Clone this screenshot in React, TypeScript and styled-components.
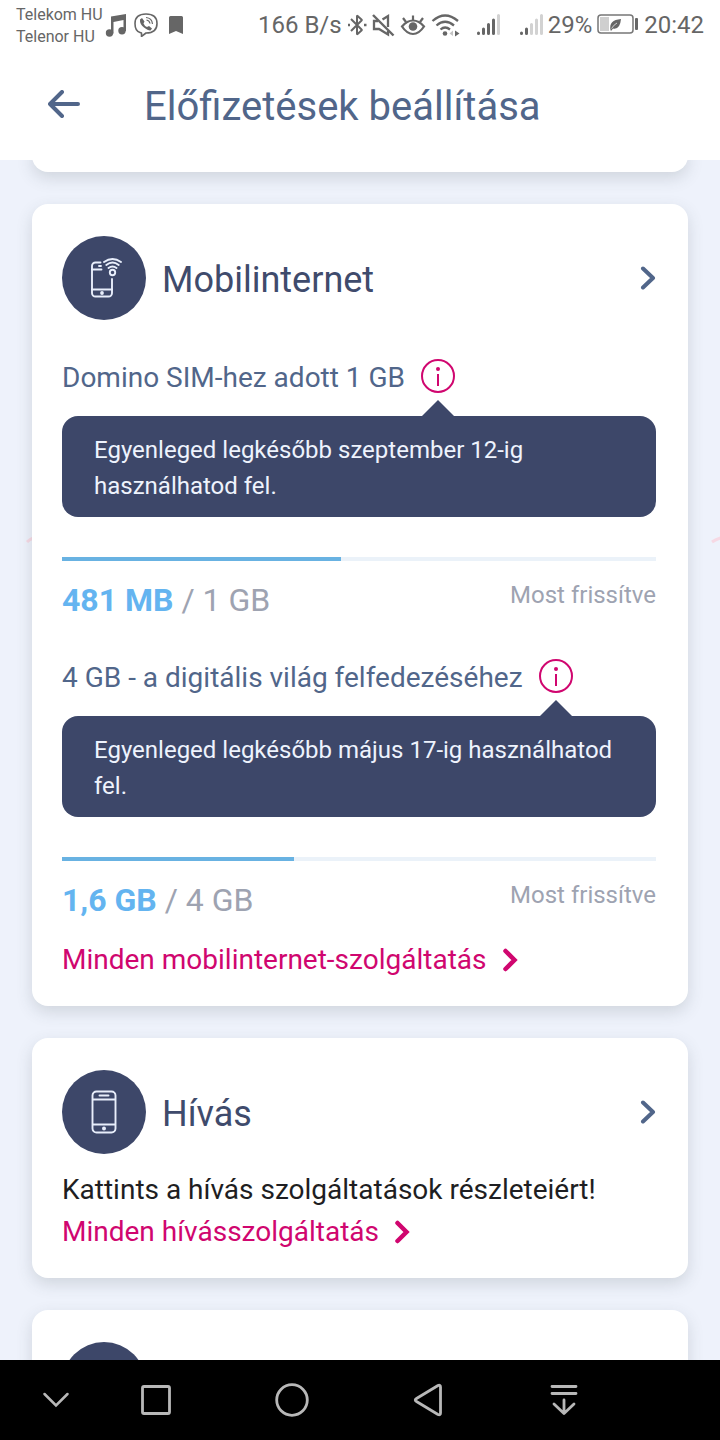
import React from "react";
import styled, { createGlobalStyle } from "styled-components";

const color = {
  navy: "#3d4769",
  slate: "#51668a",
  heading: "#3f4b6c",
  magenta: "#d0066f",
  sky: "#64b4f0",
  bar: "#68b2e2",
  track: "#ebf2f9",
  grey: "#9ea3b1",
  status: "#666666",
  page: "#eef2fb",
  nav: "#b8b8b8",
};

const GlobalStyle = createGlobalStyle`
  *, *::before, *::after { box-sizing: border-box; }
  body { margin: 0; background: ${color.page}; font-family: Roboto, "Liberation Sans", sans-serif; }
  h1, h2, h3, p { margin: 0; font-weight: 400; }
  button { margin: 0; padding: 0; border: 0; background: none; font: inherit; color: inherit; cursor: pointer; }
  a { text-decoration: none; }
  svg { display: block; flex: none; }
`;

const Screen = styled.div`
  display: flex;
  flex-direction: column;
  height: 100vh;
`;

const StatusBar = styled.div`
  flex: none;
  display: flex;
  justify-content: space-between;
  align-items: center;
  height: 48px;
  padding: 2px 16px 0;
  background: #fff;
  color: ${color.status};
  font-size: 24px;
  line-height: 28px;
  white-space: nowrap;
`;

const StatusGroup = styled.div<{ $gap: number }>`
  display: flex;
  align-items: center;
  gap: ${(p) => p.$gap}px;
`;

const Operators = styled.div`
  padding-top: 2px;
  font-size: 16px;
  line-height: 22px;
`;

const TopBar = styled.header`
  flex: none;
  display: flex;
  align-items: center;
  gap: 64px;
  height: 112px;
  padding: 0 48px;
  background: #fff;
  color: ${color.slate};
`;

const Title = styled.h1`
  font-size: 40px;
  line-height: 48px;
  padding-top: 6px;
`;

const Content = styled.main`
  position: relative;
  flex: 1;
  min-height: 0;
  overflow: hidden auto;
  scrollbar-width: none;
  padding: 0 32px;
`;

const Backdrop = styled.svg`
  position: absolute;
  left: 0;
  top: 368px;
  width: 100%;
  height: 24px;
`;

const CardList = styled.div`
  position: relative;
  display: flex;
  flex-direction: column;
  gap: 32px;
`;

const Card = styled.section`
  padding: 32px 32px 24px 30px;
  border-radius: 16px;
  background: #fff;
  box-shadow: 0 6px 16px rgba(60, 70, 80, 0.17);
`;

const CardTail = styled(Card)`
  height: 32px;
  margin-top: -20px;
  padding: 0;
`;

const CardHeader = styled.div`
  display: flex;
  align-items: center;
  gap: 16px;
`;

const RoundIcon = styled.span`
  flex: none;
  display: flex;
  align-items: center;
  justify-content: center;
  width: 84px;
  height: 84px;
  border-radius: 50%;
  background: ${color.navy};
  color: #e8eefb;
`;

const CardTitle = styled.h2`
  flex: 1;
  padding-top: 4px;
  font-size: 36px;
  line-height: 44px;
  color: ${color.heading};
`;

const OpenButton = styled.button`
  color: ${color.slate};
`;

const AllowanceList = styled.div`
  display: flex;
  flex-direction: column;
  gap: 38px;
  padding: 38px 0 18px;
`;

const Allowance = styled.article`
  display: flex;
  flex-direction: column;
`;

const AllowanceName = styled.div`
  display: flex;
  align-items: center;
  gap: 16px;
  height: 36px;
  color: ${color.slate};
`;

const Name = styled.h3`
  padding-top: 4px;
  font-size: 28px;
  line-height: 36px;
`;

const InfoButton = styled.button`
  position: relative;
  color: ${color.magenta};
  &::after {
    content: "";
    position: absolute;
    top: 41px;
    left: 0;
    border: 17px solid transparent;
    border-top-width: 0;
    border-bottom-color: ${color.navy};
  }
`;

const Tooltip = styled.p`
  margin-top: 22px;
  padding: 16px 32px 13px;
  border-radius: 16px;
  background: ${color.navy};
  color: #eef3fd;
  font-size: 24px;
  line-height: 36px;
`;

const Track = styled.div`
  height: 4px;
  margin-top: 40px;
  background: ${color.track};
`;

const Fill = styled.div`
  height: 100%;
  background: ${color.bar};
`;

const Usage = styled.div`
  display: flex;
  justify-content: space-between;
  align-items: flex-start;
  height: 59px;
  padding-top: 20px;
  color: ${color.grey};
`;

const Amount = styled.span`
  font-size: 32px;
  line-height: 38px;
`;

const Left = styled.strong`
  font-weight: 700;
  color: ${color.sky};
`;

const Updated = styled.span`
  font-size: 24px;
  line-height: 28px;
`;

const Hint = styled.p`
  padding-top: 16px;
  font-size: 28px;
  line-height: 40px;
  color: #1e1e22;
`;

const MoreLink = styled.a`
  display: flex;
  align-items: center;
  gap: 16px;
  font-size: 28px;
  line-height: 44px;
  color: ${color.magenta};
`;

const NavBar = styled.nav`
  flex: none;
  display: grid;
  grid-template-columns: 88px repeat(4, 136px);
  align-items: center;
  height: 80px;
  background: #000;
  color: ${color.nav};
`;

const NavButton = styled.button`
  display: flex;
  justify-content: center;
  &:first-child { padding-left: 24px; }
`;

function Chevron() {
  return (
    <svg width="16" height="24" viewBox="0 0 16 24" fill="none" stroke="currentColor" strokeWidth="4" strokeLinecap="round" strokeLinejoin="round" aria-hidden="true">
      <path d="M3 2.500L13 12L3 21.500" />
    </svg>
  );
}

function LinkChevron() {
  return (
    <svg width="16" height="24" viewBox="0 0 16 24" fill="none" stroke="currentColor" strokeWidth="4.500" strokeLinecap="round" strokeLinejoin="miter" aria-hidden="true">
      <path d="M2.500 3L11.500 12L2.500 21" />
    </svg>
  );
}

function InfoIcon() {
  return (
    <svg width="34" height="34" viewBox="0 0 34 34" fill="none" stroke="currentColor" strokeWidth="2" aria-hidden="true">
      <circle cx="17" cy="17" r="16" />
      <path d="M17 15V27" />
      <circle cx="17" cy="10" r="2" fill="currentColor" stroke="none" />
    </svg>
  );
}

function PhoneIcon() {
  return (
    <svg width="26" height="44" viewBox="0 0 26 44" fill="none" stroke="currentColor" strokeWidth="1.900" aria-hidden="true">
      <rect x="1.500" y="1.500" width="23" height="41" rx="4" />
      <path d="M1.500 9.500H24.500M1.500 34.500H24.500" />
      <path d="M8.500 5.500H17.500" strokeLinecap="round" />
      <circle cx="13" cy="38.500" r="2" fill="currentColor" stroke="none" />
    </svg>
  );
}

function PhoneWifiIcon() {
  return (
    <svg width="40" height="40" viewBox="0 0 40 40" fill="none" stroke="currentColor" strokeWidth="1.900" strokeLinecap="round" aria-hidden="true">
      <path d="M16.500 4.500H11.500A3.500 3.500 0 0 0 8 8V35A3.500 3.500 0 0 0 11.500 38.500H24.500A3.500 3.500 0 0 0 28 35V21" />
      <path d="M8 11.500H17.500M8 31.500H28M15 8H17" />
      <circle cx="18" cy="35" r="1.900" fill="currentColor" stroke="none" />
      <circle cx="28.500" cy="14.500" r="2.700" />
      <path d="M20 4Q28.500 -2 37 4M22.300 7Q28.500 2.200 34.700 7M24.500 10Q28.500 6.800 32.500 10" />
    </svg>
  );
}

function StatusIcons() {
  return (
    <>
      <svg width="20" height="24" viewBox="0 0 20 24" fill="none" stroke="currentColor" role="img" aria-label="Bluetooth">
        <path d="M4 6L15 17L10 21.500V2.500L15 7L4 18" strokeWidth="2" strokeLinejoin="bevel" />
        <path d="M1 12H3M17 12H19.500" strokeWidth="2.500" />
      </svg>
      <svg width="23" height="24" viewBox="0 0 23 24" fill="none" stroke="currentColor" strokeWidth="2.300" role="img" aria-label="Némítva">
        <path d="M1 2L21.500 22.500" strokeWidth="2.400" />
        <path d="M6 8H2V16H7L16 21.500V18M10.500 6.500L16 3V14" />
      </svg>
      <svg width="26" height="24" viewBox="0 0 26 24" fill="none" stroke="currentColor" strokeWidth="2.200" role="img" aria-label="Szemkímélő mód">
        <path d="M2 13.500Q7 7.500 13 7.500T24 13.500Q19 21 13 21T2 13.500Z" />
        <path d="M13 7.500V2.500M6 9L3 5M20 9L23 5" />
        <circle cx="13" cy="13.500" r="4.300" fill="currentColor" stroke="none" />
      </svg>
      <svg width="29" height="24" viewBox="0 0 29 24" fill="none" stroke="currentColor" strokeWidth="2.300" role="img" aria-label="Wi-Fi">
        <path d="M1.500 8Q14 -3 27 8M5.500 12.500Q14 5 23 12.500M9.500 16.500Q14 12.500 19 16.500" />
        <circle cx="14" cy="20.500" r="2.300" fill="currentColor" stroke="none" />
        <path d="M22 17.500L18.500 20.500L22 23Z" fill="#c4c4c4" stroke="none" />
        <path d="M24 17.500L28.500 20.500L24 23.500Z" fill="currentColor" stroke="none" />
      </svg>
      <svg width="78" height="24" viewBox="0 0 78 24" fill="none" stroke="currentColor" strokeWidth="3" strokeLinecap="round" role="img" aria-label="Térerő">
        <path d="M13.500 20V20.500M18.500 16V20.500M23.500 11.500V20.500M28.500 7V20.500" />
        <path d="M33.500 2.500V20.500M66.500 11.500V20.500M71.500 7V20.500M76.500 2.500V20.500" stroke="#d2d2d2" />
        <path d="M56.500 20V20.500M61.500 16V20.500" />
      </svg>
    </>
  );
}

function Battery() {
  return (
    <svg width="42" height="24" viewBox="0 0 42 24" fill="none" role="img" aria-label="Akkumulátor">
      <rect x="1" y="2" width="35" height="18" rx="3" stroke="#777" strokeWidth="1.500" />
      <rect x="3" y="4" width="9" height="14" fill="#cfcfcf" />
      <path d="M13.500 17Q11.500 7 24 6Q23 17 16 15.500L14 18Z" fill="currentColor" />
      <path d="M14.500 15.500Q17 11.500 20 10" stroke="#fff" strokeWidth="0.700" />
      <rect x="38" y="5" width="3" height="12" rx="1" fill="currentColor" />
    </svg>
  );
}

function NotificationIcons() {
  return (
    <>
      <svg width="22" height="24" viewBox="0 0 22 24" fill="currentColor" role="img" aria-label="Zene">
        <path d="M6 3.500L21 1V18H18.500V7L8.500 9V20.500H6Z" />
        <circle cx="4.500" cy="20" r="3.700" />
        <circle cx="17" cy="17.800" r="3.700" />
      </svg>
      <svg width="24" height="24" viewBox="0 0 24 24" fill="none" stroke="currentColor" strokeWidth="1.600" strokeLinejoin="round" role="img" aria-label="Viber">
        <path d="M6 19.500Q1 18 1 10.500Q1 1 12 1T23 10.500Q23 20 12 20L7.500 23.500V20Z" />
        <path d="M6 6.500L8 5L10.500 8.500L9.500 10.500Q10.500 13 13 14L15 13L18 15.500L16.500 17.500Q14.500 18 10 14.500T6 6.500Z" fill="currentColor" stroke="none" />
        <path d="M12 4.500Q18 5 18.500 11M12.500 7Q15.500 7.500 16 10.500" strokeWidth="1.200" />
      </svg>
      <svg width="18" height="18" viewBox="0 0 18 18" fill="currentColor" role="img" aria-label="Könyvjelző">
        <path d="M4 1.500Q4 0 5.500 0H16.500Q18 0 18 1.500V18L11 15L4 18Z" />
      </svg>
    </>
  );
}

interface AllowanceData {
  name: string;
  note: string;
  left: string;
  total: string;
  percent: number;
}

const allowances: AllowanceData[] = [
  {
    name: "Domino SIM-hez adott 1 GB",
    note: "Egyenleged legkésőbb szeptember 12-ig használhatod fel.",
    left: "481 MB",
    total: "1 GB",
    percent: 47,
  },
  {
    name: "4 GB - a digitális világ felfedezéséhez",
    note: "Egyenleged legkésőbb május 17-ig használhatod fel.",
    left: "1,6 GB",
    total: "4 GB",
    percent: 39,
  },
];

export default function App() {
  return (
    <>
      <GlobalStyle />
      <Screen>
        <StatusBar>
          <StatusGroup $gap={2}>
            <Operators>
              Telekom HU
              <br />
              Telenor HU
            </Operators>
            <StatusGroup $gap={7}>
              <NotificationIcons />
            </StatusGroup>
          </StatusGroup>
          <StatusGroup $gap={5}>
            <span>166 B/s</span>
            <StatusIcons />
            <span>29%</span>
            <Battery />
            <span>20:42</span>
          </StatusGroup>
        </StatusBar>
        <TopBar>
          <button type="button" aria-label="Vissza">
            <svg width="32" height="28" viewBox="0 0 32 28" fill="none" stroke="currentColor" strokeWidth="4" strokeLinecap="round" strokeLinejoin="round" aria-hidden="true">
              <path d="M14 2L2 14L14 26M2 14H30" />
            </svg>
          </button>
          <Title>Előfizetések beállítása</Title>
        </TopBar>
        <Content>
          <Backdrop viewBox="0 0 720 24" preserveAspectRatio="none" fill="none" stroke="#f6d9e4" strokeWidth="3" aria-hidden="true">
            <path d="M27 14Q30 11 36 9M712 14Q716 11 724 9" />
          </Backdrop>
          <CardList>
            <CardTail aria-hidden="true" />
            <Card>
              <CardHeader>
                <RoundIcon><PhoneWifiIcon /></RoundIcon>
                <CardTitle>Mobilinternet</CardTitle>
                <OpenButton type="button" aria-label="Mobilinternet megnyitása"><Chevron /></OpenButton>
              </CardHeader>
              <AllowanceList>
                {allowances.map((a) => (
                  <Allowance key={a.name}>
                    <AllowanceName>
                      <Name>{a.name}</Name>
                      <InfoButton type="button" aria-label="Információ"><InfoIcon /></InfoButton>
                    </AllowanceName>
                    <Tooltip>{a.note}</Tooltip>
                    <Track role="progressbar" aria-label={a.name} aria-valuenow={a.percent}>
                      <Fill style={{ width: `${a.percent}%` }} />
                    </Track>
                    <Usage>
                      <Amount><Left>{a.left}</Left> / {a.total}</Amount>
                      <Updated>Most frissítve</Updated>
                    </Usage>
                  </Allowance>
                ))}
              </AllowanceList>
              <MoreLink href="#mobilinternet">Minden mobilinternet-szolgáltatás <LinkChevron /></MoreLink>
            </Card>
            <Card>
              <CardHeader>
                <RoundIcon><PhoneIcon /></RoundIcon>
                <CardTitle>Hívás</CardTitle>
                <OpenButton type="button" aria-label="Hívás megnyitása"><Chevron /></OpenButton>
              </CardHeader>
              <Hint>Kattints a hívás szolgáltatások részleteiért!</Hint>
              <MoreLink href="#hivas">Minden hívásszolgáltatás <LinkChevron /></MoreLink>
            </Card>
            <Card>
              <CardHeader>
                <RoundIcon />
              </CardHeader>
            </Card>
          </CardList>
        </Content>
        <NavBar aria-label="Rendszer">
          <NavButton type="button" aria-label="Elrejtés">
            <svg width="28" height="16" viewBox="0 0 28 16" fill="none" stroke="currentColor" strokeWidth="2.500" strokeLinecap="round"><path d="M2.500 2L14 13.500L25.500 2" /></svg>
          </NavButton>
          <NavButton type="button" aria-label="Legutóbbiak">
            <svg width="30" height="30" viewBox="0 0 30 30" fill="none" stroke="currentColor" strokeWidth="2.800"><rect x="1.500" y="1.500" width="27" height="27" rx="1.500" /></svg>
          </NavButton>
          <NavButton type="button" aria-label="Kezdőlap">
            <svg width="34" height="34" viewBox="0 0 34 34" fill="none" stroke="currentColor" strokeWidth="2.800"><circle cx="17" cy="17" r="15.300" /></svg>
          </NavButton>
          <NavButton type="button" aria-label="Vissza">
            <svg width="30" height="34" viewBox="0 0 30 34" fill="none" stroke="currentColor" strokeWidth="2.800" strokeLinejoin="round"><path d="M3.500 15.500L25 2.500Q27.500 1.500 27.500 4V30Q27.500 32.500 25 31.500L3.500 18.500Q1 17 3.500 15.500Z" /></svg>
          </NavButton>
          <NavButton type="button" aria-label="Értesítések">
            <svg width="28" height="32" viewBox="0 0 28 32" fill="none" stroke="currentColor" strokeWidth="2.800" strokeLinecap="round" strokeLinejoin="round"><path d="M2 2.500H26M2 9.500H26M14 16V29.500M4 20L14 29.500L24 20" /></svg>
          </NavButton>
        </NavBar>
      </Screen>
    </>
  );
}
